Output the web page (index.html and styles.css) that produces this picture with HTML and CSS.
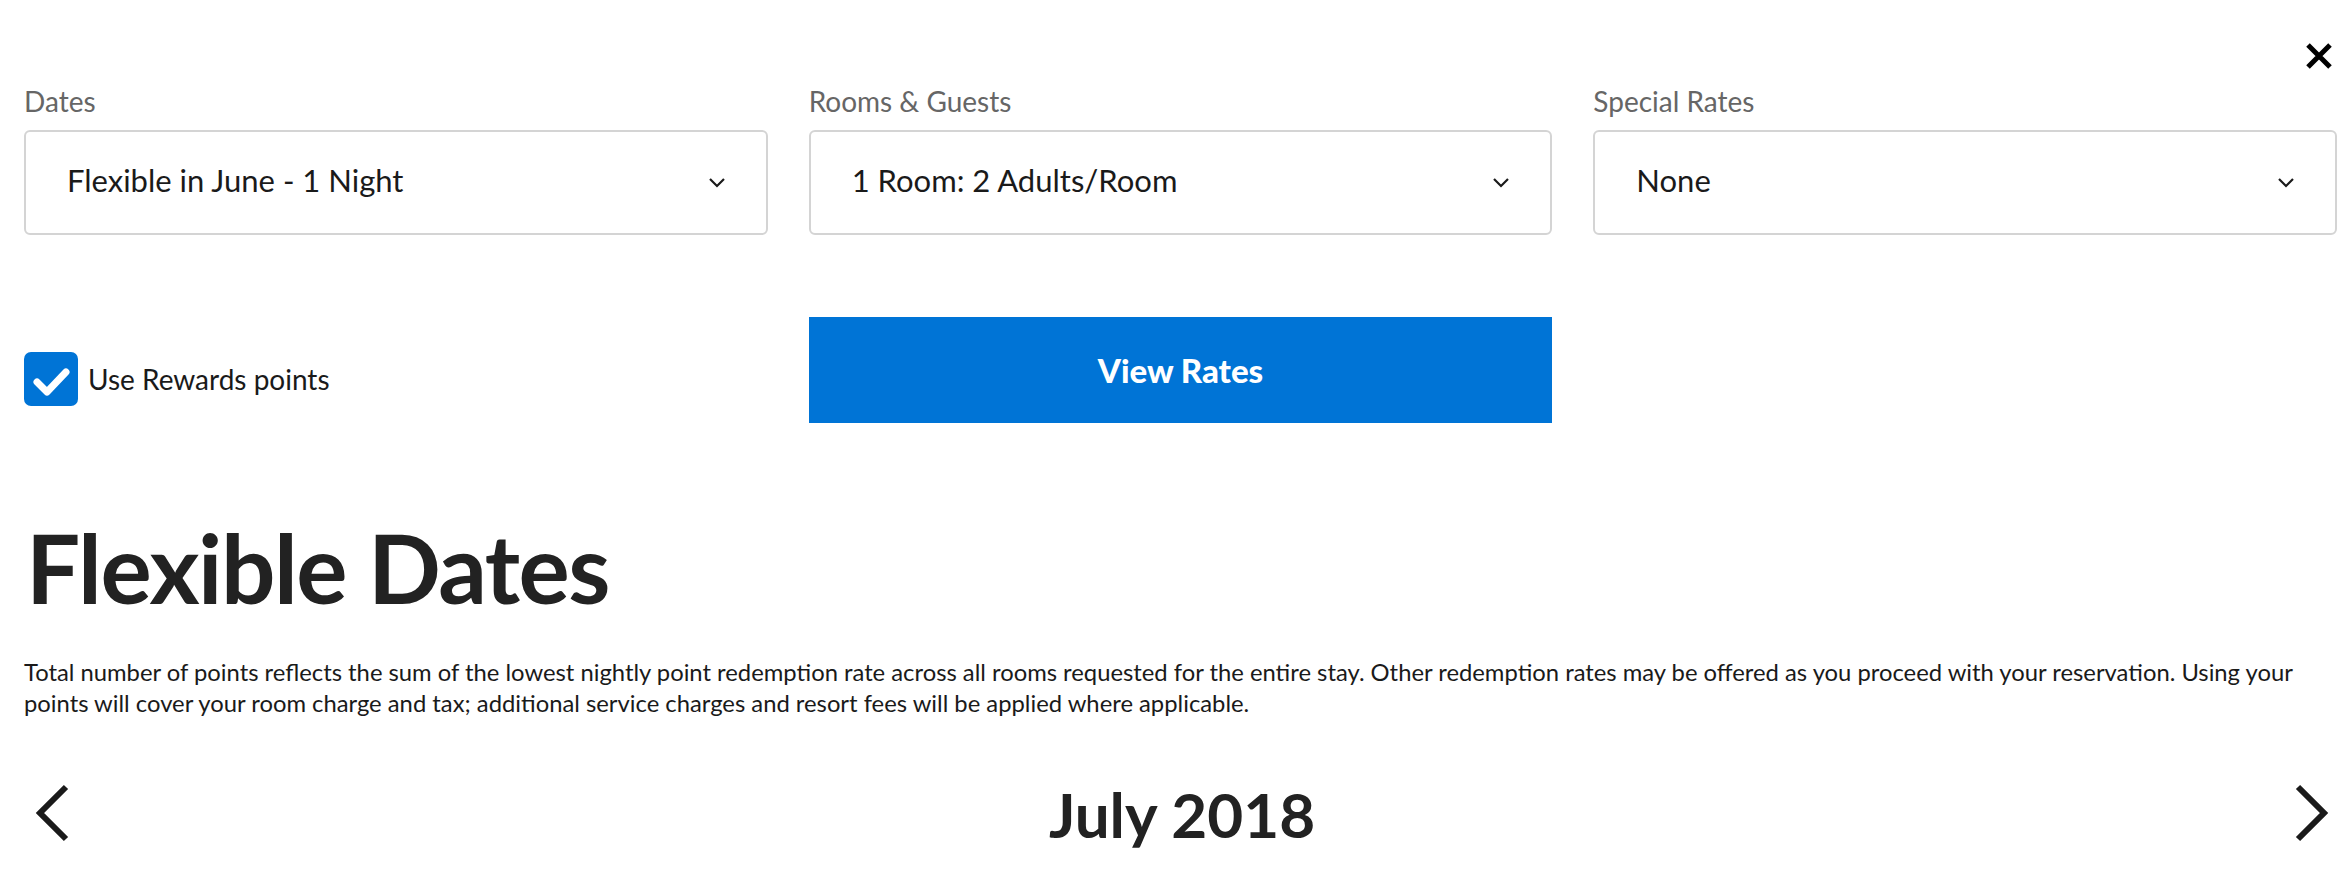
FILE: index.html
```html
<!DOCTYPE html>
<html lang="en">
<head>
  <meta charset="UTF-8">
  <meta name="viewport" content="width=device-width, initial-scale=1.0">
  <title>Flexible Dates</title>
  <link rel="stylesheet" href="styles.css">
</head>
<body>
<div class="page">
  <div class="top-bar">
    <button class="close-btn" aria-label="Close">
      <svg width="28" height="28" viewBox="0 0 28 28"><path d="M3 3 L25 25 M25 3 L3 25" stroke="#000" stroke-width="5" fill="none"/></svg>
    </button>
  </div>

  <div class="search-grid">
    <div class="field">
      <label class="field-label">Dates</label>
      <div class="select-box">
        <span>Flexible in June - 1 Night</span>
        <svg class="chevron" width="18" height="11" viewBox="0 0 18 11"><path d="M2 2 L9 9 L16 2" stroke="#1a1a1a" stroke-width="2.2" fill="none"/></svg>
      </div>
    </div>
    <div class="field">
      <label class="field-label">Rooms &amp; Guests</label>
      <div class="select-box">
        <span>1 Room: 2 Adults/Room</span>
        <svg class="chevron" width="18" height="11" viewBox="0 0 18 11"><path d="M2 2 L9 9 L16 2" stroke="#1a1a1a" stroke-width="2.2" fill="none"/></svg>
      </div>
    </div>
    <div class="field">
      <label class="field-label">Special Rates</label>
      <div class="select-box">
        <span>None</span>
        <svg class="chevron" width="18" height="11" viewBox="0 0 18 11"><path d="M2 2 L9 9 L16 2" stroke="#1a1a1a" stroke-width="2.2" fill="none"/></svg>
      </div>
    </div>

    <div class="rewards">
      <span class="checkbox">
        <svg width="54" height="54" viewBox="0 0 54 54"><path d="M13 30 L23 40 L42 20" stroke="#fff" stroke-width="7" stroke-linecap="round" stroke-linejoin="round" fill="none"/></svg>
      </span>
      <span class="rewards-text">Use Rewards points</span>
    </div>
    <button class="view-rates">View Rates</button>
  </div>

  <h1 class="title">Flexible Dates</h1>
  <p class="note">Total number of points reflects the sum of the lowest nightly point redemption rate across all rooms requested for the entire stay. Other redemption rates may be offered as you proceed with your reservation. Using your points will cover your room charge and tax; additional service charges and resort fees will be applied where applicable.</p>

  <div class="month-nav">
    <button class="arrow arrow-left" aria-label="Previous month">
      <svg width="34" height="58" viewBox="0 0 34 58"><path d="M31 3 L5 29 L31 55" stroke="#1a1a1a" stroke-width="6" fill="none"/></svg>
    </button>
    <h2 class="month">July 2018</h2>
    <button class="arrow arrow-right" aria-label="Next month">
      <svg width="34" height="58" viewBox="0 0 34 58"><path d="M3 3 L29 29 L3 55" stroke="#1a1a1a" stroke-width="6" fill="none"/></svg>
    </button>
  </div>
</div>
</body>
</html>
```

FILE: styles.css
```css
body {
  margin: 0;
  font-family: Lato, "Open Sans", Arial, sans-serif;
  background-color: #fff;
  color: #1a1a1a;
}
.page {
  padding: 0 8px 0 24px;
}
.top-bar {
  display: flex;
  justify-content: flex-end;
  padding-top: 42px;
}
.close-btn {
  border: none;
  background: none;
  padding: 0;
  margin-right: 4px;
  height: 28px;
  cursor: pointer;
}
.search-grid {
  display: grid;
  grid-template-columns: repeat(3, 1fr);
  column-gap: 41px;
  row-gap: 82px;
}
.field-label {
  display: block;
  margin-top: 15px;
  font-size: 28px;
  line-height: 32px;
  color: #666;
}
.select-box {
  margin-top: 13px;
  box-sizing: border-box;
  height: 105px;
  display: flex;
  align-items: center;
  justify-content: space-between;
  padding: 0 40px 6px 41px;
  border: 2px solid #d4d4d4;
  border-radius: 6px;
  font-size: 31px;
  color: #1a1a1a;
}
.chevron {
  margin-top: 6px;
}
.rewards {
  display: flex;
  align-items: center;
  margin-top: 18px;
}
.checkbox {
  display: flex;
  width: 54px;
  height: 54px;
  background-color: #0074d6;
  border-radius: 7px;
}
.rewards-text {
  margin-left: 10px;
  font-size: 28px;
}
.view-rates {
  height: 106px;
  border: none;
  background-color: #0074d6;
  color: #fff;
  font-family: Lato, Arial, sans-serif;
  font-weight: 900;
  font-size: 33px;
  cursor: pointer;
}
.title {
  margin: 96px 0 0 2px;
  font-size: 96px;
  line-height: 96px;
  font-weight: 700;
  letter-spacing: -1.5px;
  color: #222;
}
.note {
  margin: 42px 0 0 0;
  font-size: 23.8px;
  line-height: 31px;
  color: #1a1a1a;
}
.month-nav {
  display: flex;
  align-items: center;
  justify-content: space-between;
  margin-top: 60px;
}
.arrow {
  border: none;
  background: none;
  padding: 0;
  cursor: pointer;
}
.arrow-left {
  margin-left: 11px;
}
.arrow-right {
  margin-right: 8px;
}
.month {
  margin: 0;
  font-size: 62px;
  line-height: 70px;
  font-weight: 700;
  color: #222;
}
```
